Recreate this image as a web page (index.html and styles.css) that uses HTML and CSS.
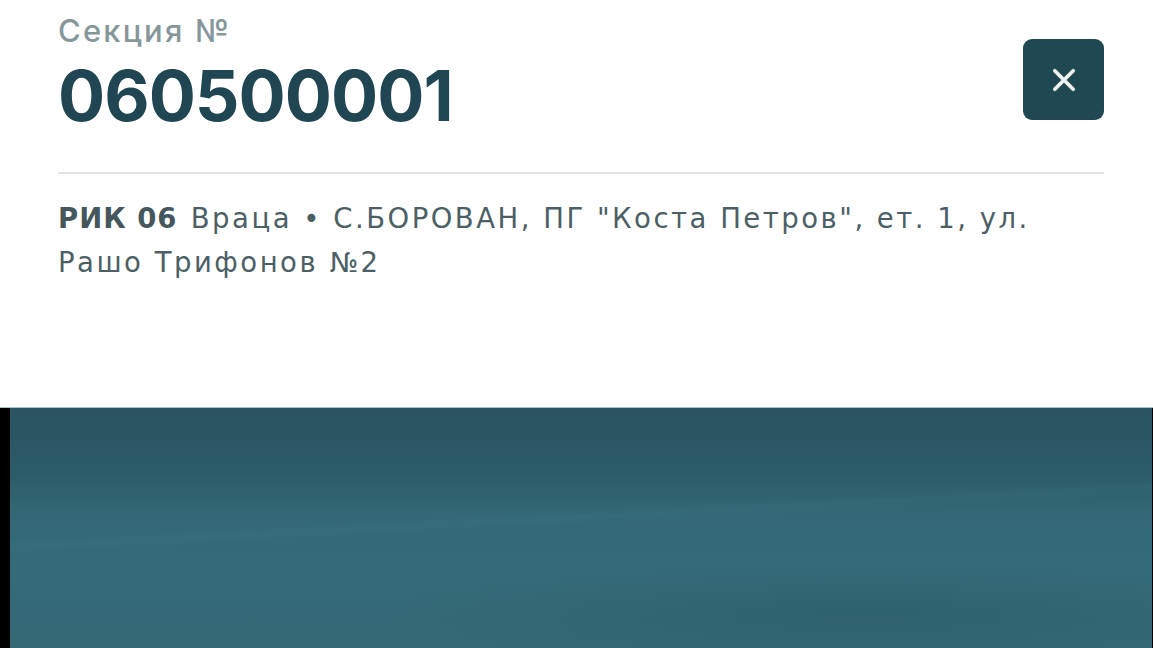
FILE: index.html
```html
<!DOCTYPE html>
<html lang="bg">
<head>
<meta charset="utf-8">
<title>Секция 060500001</title>
<link rel="stylesheet" href="styles.css">
</head>
<body>
<div class="sheet">
  <header class="head">
    <div class="titles">
      <div class="label">Секция №</div>
      <div class="number">060500001</div>
    </div>
    <button class="close" aria-label="Затвори">
      <svg viewBox="0 0 24 24" width="34" height="34"><path d="M5.5 5.5 L18.5 18.5 M18.5 5.5 L5.5 18.5" stroke="#eef3f3" stroke-width="2.6" stroke-linecap="round" fill="none"/></svg>
    </button>
  </header>
  <div class="divider"></div>
  <p class="address"><b class="rik">РИК 06</b> Враца • С.БОРОВАН, ПГ "Коста Петров", ет. 1, ул. Рашо Трифонов №2</p>
</div>
<div class="map">
  <div class="edge-left"></div>
  <div class="sea"></div>
  <div class="edge-right"></div>
</div>
</body>
</html>
```
FILE: styles.css
```css
html, body {
  margin: 0;
  padding: 0;
  background: #ffffff;
  font-family: Inter, "Noto Sans", sans-serif;
}
.sheet {
  height: 407px;
  padding: 0 49px 0 58px;
  box-sizing: border-box;
  background: #ffffff;
}
.head {
  display: flex;
  justify-content: space-between;
  align-items: flex-start;
  padding-top: 10px;
}
.label {
  font-size: 31px;
  line-height: 42px;
  color: #86979b;
  font-weight: 500;
  letter-spacing: 2.2px;
}
.number {
  font-size: 70px;
  line-height: 84px;
  font-weight: 700;
  color: #1f4652;
  letter-spacing: -1px;
  margin-top: 2px;
}
.close {
  margin-top: 29px;
  width: 81px;
  height: 81px;
  border: none;
  border-radius: 9px;
  background: #1f4852;
  display: flex;
  align-items: center;
  justify-content: center;
  padding: 0;
}
.divider {
  margin-top: 34px;
  height: 2px;
  background: #e2e4e4;
}
.address {
  margin: 22px 0 0 0;
  font-family: "DejaVu Sans", "Noto Sans", sans-serif;
  font-size: 27.5px;
  line-height: 44px;
  color: #4c5f65;
  letter-spacing: 2.5px;
}
.rik {
  font-weight: 700;
  color: #44575d;
  letter-spacing: 1px;
  margin-right: 2px;
}
.map {
  display: flex;
  height: 241px;
  border-top: 1px solid #a9c2c6;
}
.edge-left {
  width: 10px;
  background: #000000;
}
.edge-right {
  width: 1px;
  background: #000000;
}
.sea {
  flex: 1;
  background:
    radial-gradient(ellipse 60% 30% at 75% 85%, rgba(40,84,98,0.35), rgba(40,84,98,0) 70%),
    linear-gradient(177deg, transparent 44%, rgba(70,130,145,0.12) 46%, transparent 49%),
    linear-gradient(180deg, #2a5462 0%, #2b5a68 25%, #336976 45%, #346b78 70%, #336875 100%);
}
```
